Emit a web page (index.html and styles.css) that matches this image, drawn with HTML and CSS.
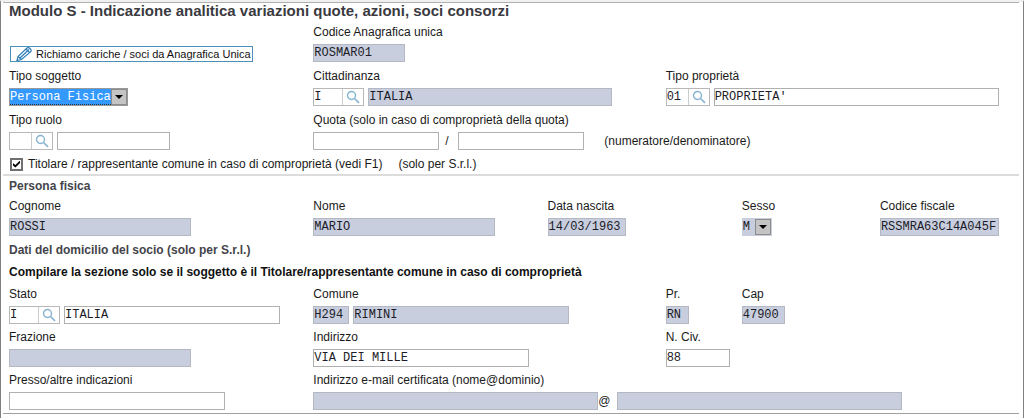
FILE: index.html
```html
<!DOCTYPE html>
<html lang="it">
<head>
<meta charset="utf-8">
<title>Modulo S</title>
<link rel="stylesheet" href="styles.css">
</head>
<body>
<svg class="defs" aria-hidden="true">
  <symbol id="lens" viewBox="0 0 14 14">
    <circle cx="5.5" cy="5.5" r="4" fill="none" stroke="#86b3cf" stroke-width="1.4"/>
    <path d="M8.500 8.500L13 12.800" stroke="#86b3cf" stroke-width="1.7"/>
  </symbol>
  <symbol id="caret" viewBox="0 0 8 4"><path d="M0 0H8L4 4Z" fill="#000"/></symbol>
</svg>
<form class="panel">
  <h1 class="title">Modulo S - Indicazione analitica variazioni quote, azioni, soci consorzi</h1>

  <section class="section section-subject">
    <div class="row">
      <div class="field field-bottom c1">
        <button type="button" class="recall">
          <svg class="pencil" viewBox="0 0 16 14" fill="none" stroke="#2f7fb8" stroke-width="1.2">
            <path d="M1 13.500L2 9.500L11 1Q12.500 0 14 1.500T15 4.500L5.500 12.500Z"/>
            <path d="M2 9.500L5.500 12.500M4 11L13 2.500M10 2L13.500 5.500"/>
          </svg>
          Richiamo cariche / soci da Anagrafica Unica
        </button>
      </div>
      <div class="field c2">
        <label for="codice">Codice Anagrafica unica</label>
        <input id="codice" class="box locked w-92" value="ROSMAR01" readonly>
      </div>
    </div>

    <div class="row">
      <div class="field c1">
        <label for="soggetto">Tipo soggetto</label>
        <div class="select select-focus">
          <select id="soggetto"><option>Persona Fisica</option></select>
          <span class="arrow"><svg><use href="#caret"/></svg></span>
        </div>
      </div>
      <div class="field c2">
        <label for="cittadinanza">Cittadinanza</label>
        <div class="group">
          <div class="lookup"><input id="cittadinanza" class="code w-28" value="I"><button type="button" class="search" aria-label="Cerca cittadinanza"><svg><use href="#lens"/></svg></button></div>
          <input class="box locked w-244" value="ITALIA" aria-label="Descrizione cittadinanza" readonly>
        </div>
      </div>
      <div class="field c4-end">
        <label for="proprieta">Tipo proprietà</label>
        <div class="group">
          <div class="lookup"><input id="proprieta" class="code w-21" value="01"><button type="button" class="search" aria-label="Cerca tipo proprietà"><svg><use href="#lens"/></svg></button></div>
          <input class="box grow" value="PROPRIETA'" aria-label="Descrizione tipo proprietà">
        </div>
      </div>
    </div>

    <div class="row">
      <div class="field c1">
        <label for="ruolo">Tipo ruolo</label>
        <div class="group">
          <div class="lookup"><input id="ruolo" class="code w-21"><button type="button" class="search" aria-label="Cerca tipo ruolo"><svg><use href="#lens"/></svg></button></div>
          <input class="box w-113" aria-label="Descrizione tipo ruolo">
        </div>
      </div>
      <div class="field c2-end">
        <label for="quota">Quota (solo in caso di comproprietà della quota)</label>
        <div class="group quota">
          <input id="quota" class="box w-126">
          <span class="slash">/</span>
          <input class="box w-126" aria-label="Denominatore">
          <span class="note">(numeratore/denominatore)</span>
        </div>
      </div>
    </div>

    <div class="check-row">
      <label class="check"><input type="checkbox" checked>Titolare / rappresentante comune in caso di comproprietà (vedi F1)</label>
      <span>(solo per S.r.l.)</span>
    </div>
  </section>

  <section class="section section-person">
    <h2 class="heading">Persona fisica</h2>
    <div class="row person">
      <div class="field c1"><label for="cognome">Cognome</label><input id="cognome" class="box locked w-182" value="ROSSI" readonly></div>
      <div class="field c2"><label for="nome">Nome</label><input id="nome" class="box locked w-182" value="MARIO" readonly></div>
      <div class="field c3"><label for="nascita">Data nascita</label><input id="nascita" class="box locked w-78" value="14/03/1963" readonly></div>
      <div class="field c5">
        <label for="sesso">Sesso</label>
        <div class="select select-locked">
          <select id="sesso"><option>M</option></select>
          <span class="arrow"><svg><use href="#caret"/></svg></span>
        </div>
      </div>
      <div class="field c6"><label for="fiscale">Codice fiscale</label><input id="fiscale" class="box locked w-full" value="RSSMRA63C14A045F" readonly></div>
    </div>
    <h2 class="heading">Dati del domicilio del socio (solo per S.r.l.)</h2>
    <p class="heading strong">Compilare la sezione solo se il soggetto è il Titolare/rappresentante comune in caso di comproprietà</p>

    <div class="address">
      <div class="row">
        <div class="field c1">
          <label for="stato">Stato</label>
          <div class="group">
            <div class="lookup"><input id="stato" class="code w-28" value="I"><button type="button" class="search" aria-label="Cerca stato"><svg><use href="#lens"/></svg></button></div>
            <input class="box w-216" value="ITALIA" aria-label="Descrizione stato">
          </div>
        </div>
        <div class="field c2">
          <label for="comune">Comune</label>
          <div class="group">
            <input id="comune" class="box locked w-36" value="H294" readonly>
            <input class="box locked w-216" value="RIMINI" aria-label="Descrizione comune" readonly>
          </div>
        </div>
        <div class="field c4"><label for="pr">Pr.</label><input id="pr" class="box locked w-23" value="RN" readonly></div>
        <div class="field c5"><label for="cap">Cap</label><input id="cap" class="box locked w-43" value="47900" readonly></div>
      </div>
      <div class="row">
        <div class="field c1"><label for="frazione">Frazione</label><input id="frazione" class="box locked w-182" readonly></div>
        <div class="field c2"><label for="indirizzo">Indirizzo</label><input id="indirizzo" class="box w-216" value="VIA DEI MILLE"></div>
        <div class="field c4"><label for="civico">N. Civ.</label><input id="civico" class="box w-64" value="88"></div>
      </div>
      <div class="row">
        <div class="field c1"><label for="presso">Presso/altre indicazioni</label><input id="presso" class="box w-216"></div>
        <div class="field c2-end">
          <label for="email">Indirizzo e-mail certificata (nome@dominio)</label>
          <div class="group email">
            <input id="email" class="box locked w-285" readonly>
            <span class="at">@</span>
            <input class="box locked w-285" aria-label="Dominio e-mail" readonly>
          </div>
        </div>
      </div>
    </div>
  </section>
</form>
</body>
</html>
```
FILE: styles.css
```css
* { box-sizing: border-box; }

body {
  margin: 0;
  background: #fff;
  color: #1a1a1a;
  font: 12px/20px "Liberation Sans", Arial, sans-serif;
}

.defs { position: absolute; width: 0; height: 0; }

.panel {
  min-height: 100vh;
  padding: 0 4px 5px 2px;
  border-top: 2px solid #f0f0f0;
  border-left: 1px solid #808080;
  border-right: 1px solid #808080;
}

.title {
  margin: 0;
  padding-left: 6px;
  height: 20px;
  border-top: 1px solid #b0b0b0;
  color: #3a3a3f;
  font-size: 15px;
  line-height: 15px;
}

.section { padding: 0 20px 0 6px; }
.section-subject { border-bottom: 2px solid #dcdcdc; }
.section-person { border-bottom: 1px solid #a0a0a0; }

/* six shared columns */
.row {
  display: grid;
  grid-template-columns: 304fr 234fr 118fr 76fr 138fr 119fr;
  margin-bottom: 3px;
}
.section-subject .row, .person { margin-bottom: 4px; }

.field { display: flex; flex-direction: column; align-items: flex-start; gap: 2px; min-width: 0; }
.field-bottom { justify-content: flex-end; }
.field > label { padding-left: 0; white-space: nowrap; }

.c1 { grid-column: 1; }
.c2 { grid-column: 2; white-space: nowrap; }
.c2-end { grid-column: 2 / -1; }
.c3 { grid-column: 3; }
.c4 { grid-column: 4; }
.c4-end { grid-column: 4 / -1; }
.c5 { grid-column: 5; }
.c6 { grid-column: 6; }

.group { display: flex; gap: 4px; align-self: stretch; }

.box, .code {
  height: 18px;
  padding: 0;
  border: 1px solid #b0b0b0;
  border-radius: 0;
  background: #fff;
  color: #1c1c28;
  font: 12px/16px "Liberation Mono", "Courier New", monospace;
  outline: 0;
  flex: none;
}

.locked { background: #c8cede; border-color: #b4b8c2; }
.group .grow { flex: 1; min-width: 0; }

.lookup { display: flex; border: 1px solid #b8b8b8; height: 18px; flex: none; }
.lookup .code { height: 16px; border: 0; }
.search { width: 21px; padding: 0; border: 0; border-left: 1px solid #ccc; background: #fff; display: grid; place-items: center; }
.search svg { width: 14px; height: 14px; }

.w-21 { width: 21px; }
.w-23 { width: 23px; }
.w-28 { width: 28px; }
.w-36 { width: 36px; }
.w-43 { width: 43px; }
.w-64 { width: 64px; }
.w-78 { width: 78px; }
.w-92 { width: 92px; }
.w-113 { width: 113px; }
.w-126 { width: 126px; }
.w-182 { width: 182px; }
.w-216 { width: 216px; }
.w-244 { width: 244px; }
.w-285 { width: 285px; }
.w-full { width: 100%; }

.recall {
  display: flex;
  align-items: center;
  gap: 4px;
  height: 16px;
  padding: 0 1px 0 5px;
  margin-left: 1px;
  border: 1px solid #4b90b8;
  background: #fff;
  color: #111;
  font: 11px/14px "Liberation Sans", Arial, sans-serif;
  white-space: nowrap;
}
.pencil { width: 16px; height: 14px; }

.select { display: flex; height: 18px; border: 1px solid #999; }
.select select {
  appearance: none;
  border: 0;
  border-radius: 0;
  padding: 0;
  outline: 0;
  font: 12px/16px "Liberation Mono", "Courier New", monospace;
}
.arrow {
  width: 16px;
  border: 1px solid #8c8c8c;
  background: #c4c4c4;
  display: grid;
  place-items: center;
  pointer-events: none;
}
.arrow svg { width: 8px; height: 4px; }
.select-focus select { width: 101px; background: #3399ff; color: #fff; border-bottom: 1px dotted #234; }
.select-locked { border-color: #c8cede; background: #c8cede; }
.select-locked select { width: 12px; background: #c8cede; color: #1c1c28; }

.quota { gap: 0; }
.slash { width: 19px; padding-left: 6px; line-height: 18px; }
.note { padding-left: 20px; line-height: 18px; }
.email { gap: 0; }
.at { width: 19px; line-height: 18px; }

.check-row { display: flex; gap: 16px; height: 20px; padding-left: 1px; line-height: 20px; }
.check { display: flex; align-items: center; gap: 5px; height: 20px; }
.check input {
  appearance: none;
  width: 13px;
  height: 13px;
  margin: 0;
  border: 2px solid #707070;
  background: #fff;
  display: grid;
  place-items: center;
}
.check input:checked::before {
  content: "";
  width: 7px;
  height: 7px;
  background: #000;
  clip-path: polygon(0 40%, 35% 65%, 100% 0, 100% 35%, 35% 100%, 0 70%);
}

.heading { margin: 0; font-size: 12px; font-weight: bold; line-height: 20px; color: #44444a; }
.strong { color: #111; margin: 2px 0; }
```
